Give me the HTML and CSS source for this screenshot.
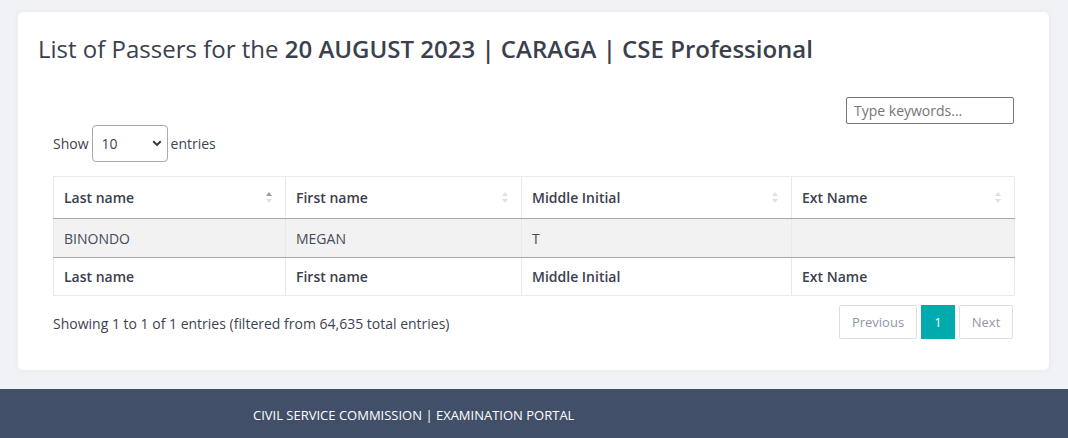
FILE: index.html
```html
<!DOCTYPE html>
<html lang="en">
<head>
<meta charset="utf-8">
<title>List of Passers</title>
<link rel="stylesheet" href="styles.css">
</head>
<body>
<main class="page">
  <section class="card">
    <h1 class="title">List of Passers for the <strong>20 AUGUST 2023 | CARAGA | CSE Professional</strong></h1>
    <div class="dt-wrapper">
      <div class="dt-filter">
        <input class="search" type="text" placeholder="Type keywords...">
      </div>
      <div class="dt-length">
        <span>Show</span>
        <div class="select">
          <span class="select-value">10</span>
          <svg class="chev" width="10" height="7" viewBox="0 0 10 7"><path d="M1.2 1.3 L5 5 L8.8 1.3" fill="none" stroke="#333" stroke-width="1.9"/></svg>
        </div>
        <span>entries</span>
      </div>
      <table class="dt-table">
        <colgroup>
          <col class="c1"><col class="c2"><col class="c3"><col class="c4">
        </colgroup>
        <thead>
          <tr>
            <th><div class="th-in"><span>Last name</span><span class="sort asc"><i class="up"></i><i class="down"></i></span></div></th>
            <th><div class="th-in"><span>First name</span><span class="sort"><i class="up"></i><i class="down"></i></span></div></th>
            <th><div class="th-in"><span>Middle Initial</span><span class="sort"><i class="up"></i><i class="down"></i></span></div></th>
            <th><div class="th-in"><span>Ext Name</span><span class="sort"><i class="up"></i><i class="down"></i></span></div></th>
          </tr>
        </thead>
        <tbody>
          <tr class="odd">
            <td>BINONDO</td>
            <td>MEGAN</td>
            <td>T</td>
            <td></td>
          </tr>
        </tbody>
        <tfoot>
          <tr>
            <th>Last name</th>
            <th>First name</th>
            <th>Middle Initial</th>
            <th>Ext Name</th>
          </tr>
        </tfoot>
      </table>
      <div class="dt-bottom">
        <div class="dt-info">Showing 1 to 1 of 1 entries (filtered from 64,635 total entries)</div>
        <div class="pager">
          <span class="pg-btn disabled">Previous</span>
          <span class="pg-btn current">1</span>
          <span class="pg-btn disabled">Next</span>
        </div>
      </div>
    </div>
  </section>
</main>
<footer class="footer">
  <div class="footer-text">CIVIL SERVICE COMMISSION | EXAMINATION PORTAL</div>
</footer>
</body>
</html>
```

FILE: styles.css
```css
* { box-sizing: border-box; }
html, body { margin: 0; padding: 0; }
body {
  background: #f1f2f6;
  font-family: "Open Sans", "Noto Sans", sans-serif;
  color: #3d4351;
  font-size: 14px;
}
.page {
  padding: 12px 19px 19px 18px;
}
.card {
  background: #fff;
  border-radius: 5px;
  box-shadow: 0 0 6px rgba(40, 50, 80, 0.05);
  padding: 22px 20px 20px 20px;
  height: 358px;
}
.title {
  margin: 0;
  font-size: 24px;
  line-height: 29px;
  font-weight: 400;
  color: #3a404d;
}
.title strong { font-weight: 600; }
.dt-wrapper {
  padding: 34px 15px 0 15px;
}
.dt-filter {
  display: flex;
  justify-content: flex-end;
}
.search {
  width: 168px;
  height: 27px;
  border: 1px solid #767676;
  border-radius: 2px;
  padding: 0 7px;
  font-family: "Open Sans", sans-serif;
  font-size: 14px;
  color: #555;
  outline: none;
}
.search::placeholder { color: #757575; }
.dt-length {
  display: flex;
  align-items: center;
  gap: 3px;
  height: 38px;
  padding-top: 1px;
  color: #3d4351;
}
.select {
  width: 76px;
  height: 37px;
  border: 1px solid #a9a9a9;
  border-radius: 4px;
  display: flex;
  align-items: center;
  justify-content: space-between;
  padding: 0 5px 0 9px;
  color: #3d4351;
}
.chev { display: block; }
.dt-table {
  margin-top: 14px;
  width: 100%;
  border-collapse: collapse;
  table-layout: fixed;
  border: 1px solid #e8e9ec;
}
.c1 { width: 232px; }
.c2 { width: 236px; }
.c3 { width: 270px; }
.c4 { width: 223px; }
.dt-table th, .dt-table td {
  text-align: left;
  padding: 0 10px;
  border-left: 1px solid #e8e9ec;
  border-right: 1px solid #e8e9ec;
}
.dt-table th {
  font-weight: 600;
  color: #3a404d;
}
.dt-table thead th {
  height: 42px;
  border-bottom: 1px solid #a8a8a8;
  border-top: 1px solid #e8e9ec;
}
.th-in {
  display: flex;
  align-items: center;
  justify-content: space-between;
}
.sort {
  display: flex;
  flex-direction: column;
  gap: 3px;
  margin-right: 3px;
}
.sort i {
  display: block;
  width: 0;
  height: 0;
  border-left: 3px solid transparent;
  border-right: 3px solid transparent;
}
.sort .up { border-bottom: 4px solid #e0e0e0; }
.sort .down { border-top: 4px solid #e0e0e0; }
.sort.asc .up { border-bottom-color: #9a9ca4; }
.dt-table tbody td {
  height: 39px;
  background: #f2f2f2;
  color: #454b59;
  border-bottom: 1px solid #a8a8a8;
}
.dt-table tfoot th {
  height: 38px;
  border-bottom: 1px solid #e8e9ec;
}
.dt-bottom {
  display: flex;
  justify-content: space-between;
  align-items: center;
  margin-top: 9px;
  padding-right: 1px;
}
.dt-info { color: #3d4351; padding-top: 2px; }
.pager {
  display: flex;
  gap: 3px;
}
.pg-btn {
  height: 34px;
  display: flex;
  align-items: center;
  justify-content: center;
  border: 1px solid #dedede;
  border-radius: 2px;
  color: #9197a3;
  font-size: 13px;
  padding: 0 12px;
}
.pg-btn:first-child { width: 78px; }
.pg-btn:last-child { width: 54px; }
.pg-btn.current {
  width: 34px;
  background: #00aaad;
  border-color: #00aaad;
  color: #fff;
  border-radius: 0;
  margin: 0 1px;
}
.footer {
  background: #424f69;
  height: 49px;
  display: flex;
  align-items: center;
  padding-left: 253px;
  padding-top: 2px;
}
.footer-text {
  color: #fff;
  font-size: 13px;
}
```
